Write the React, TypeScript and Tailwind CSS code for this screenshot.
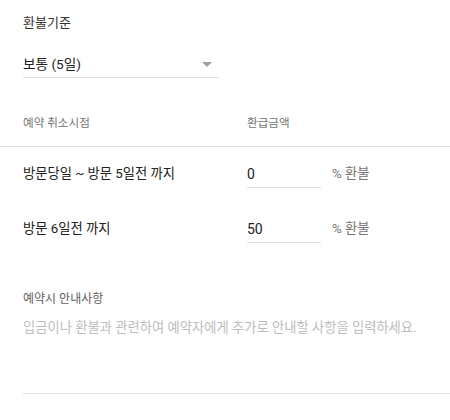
export default function App() {
  const rows = [
    { label: '방문당일 ~ 방문 5일전 까지', value: '0' },
    { label: '방문 6일전 까지', value: '50' },
  ];

  return (
    <div
      className="w-[450px] h-[420px] overflow-hidden bg-white text-[#212121]"
      style={{ fontFamily: 'Roboto, "Noto Sans CJK KR", sans-serif' }}
    >
      {/* 환불기준 */}
      <div className="pl-[23px] pt-[13px]">
        <div className="h-5 text-[13px] leading-5 text-[#333333]">환불기준</div>
        <div className="mt-[21px] w-[196px] border-b border-[#e0e0e0] pb-[3px] flex items-center justify-between">
          <span className="text-[13.6px] leading-5 text-[#212121]">보통 (5일)</span>
          <svg width="10" height="5" viewBox="0 0 10 5" className="mr-[7px]">
            <path d="M0 0h10L5 5z" fill="#9e9e9e" />
          </svg>
        </div>
      </div>

      {/* 헤더 */}
      <div className="mt-[36px] flex border-b border-[#e0e0e0] pb-[14px] pl-[23px] text-[11.6px] leading-[18px] text-[#757575]">
        <div className="w-[224px]">예약 취소시점</div>
        <div>환급금액</div>
      </div>

      {/* 행 */}
      <div className="pl-[23px] pt-[17px] flex flex-col gap-[31px]">
        {rows.map((r) => (
          <div key={r.label} className="flex items-start">
            <div className="w-[224px] text-[13.3px] leading-5 text-[#212121]">{r.label}</div>
            <div className="w-[74px] border-b border-[#e0e0e0] pb-[3px] text-[14px] leading-5 text-[#212121]">
              {r.value}
            </div>
            <div className="ml-[11px] text-[13.3px] leading-5 text-[#757575]">% 환불</div>
          </div>
        ))}
      </div>

      {/* 안내사항 */}
      <div className="pl-[23px] mt-[47px]">
        <div className="text-[12px] leading-[18px] text-[#616161]">예약시 안내사항</div>
        <div className="mt-[10px] h-[76px] border-b border-[#e0e0e0] text-[13.3px] leading-5 text-[#bdbdbd]">
          입금이나 환불과 관련하여 예약자에게 추가로 안내할 사항을 입력하세요.
        </div>
      </div>
    </div>
  );
}
